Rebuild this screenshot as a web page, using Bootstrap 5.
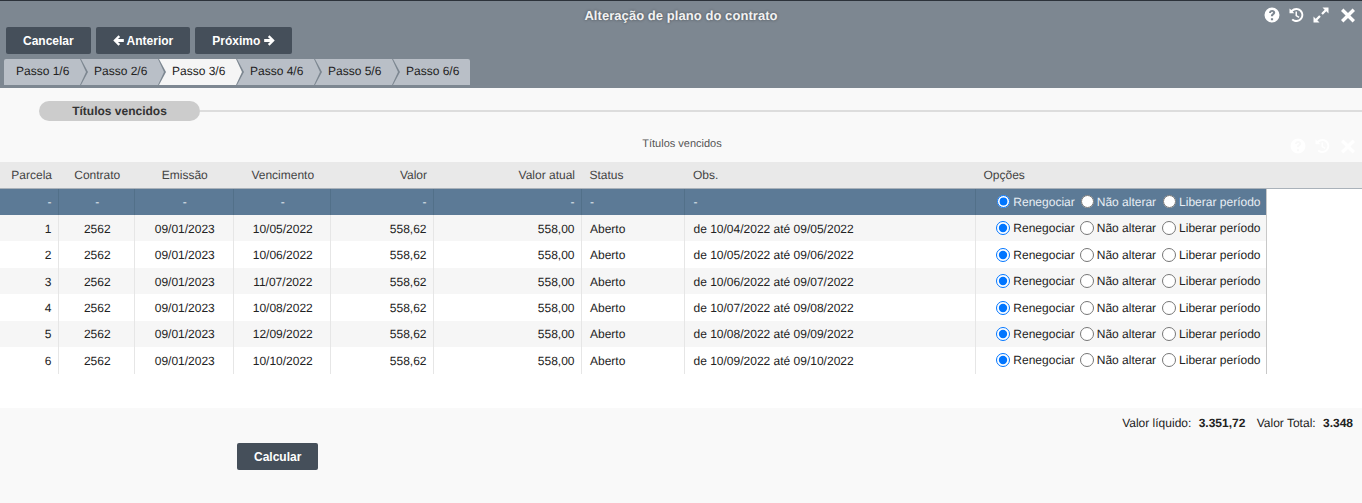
<!DOCTYPE html>
<html lang="pt-BR">
<head>
<meta charset="utf-8">
<title>Alteração de plano do contrato</title>
<link rel="stylesheet" href="https://cdn.jsdelivr.net/npm/bootstrap@5.3.0/dist/css/bootstrap.min.css">
<style>
html,body{height:503px;overflow:hidden}
body{font-family:"Liberation Sans",Arial,sans-serif;font-size:12px;background:#f9f9f9;color:#222;text-rendering:geometricPrecision}
.app-head{height:88px;background:#7d8791;border-top:1px solid #2c323a;color:#fff}
.head-title{height:26px;padding-top:7px;font-size:13px;font-weight:700;line-height:15px;text-align:center;position:relative}
.title-text{color:#f2f2f2;letter-spacing:.06px;text-shadow:0 0 3px rgba(0,0,0,.45)}
.head-icons{position:absolute;right:6px;top:6px}
.head-icons svg,.ghost-icons svg{display:block;width:16px;height:16px;fill:#fff;margin-left:8px}
.head-icons svg:nth-child(3){margin-left:9px}
.head-icons svg:nth-child(4){margin-left:11px}
.tool-row{gap:5px;padding-left:6px}
.tool-btn{background:#454f5a;color:#fff;border:0;border-radius:2px;font-size:12px;font-weight:700;height:27px;padding:1px 17px 0;line-height:26px}
.tool-btn:hover{background:#454f5a;color:#fff}
.tool-btn svg{width:11px;height:11px;fill:#fff;vertical-align:-1px}
.step-row{padding-left:4px;margin-top:5px;height:26px}
.step-item{height:26px;width:83px;margin-right:-5px;padding-left:13px;line-height:25px;background:#b9bfc7;color:#222;font-size:12px;
clip-path:polygon(0 0,calc(100% - 6px) 0,100% 50%,calc(100% - 6px) 100%,0 100%,7px 50%)}
.step-item:first-child{width:82px;padding-left:12px;clip-path:polygon(0 0,calc(100% - 6px) 0,100% 50%,calc(100% - 6px) 100%,0 100%);border-radius:2px 0 0 0}
.step-item:last-child{clip-path:polygon(0 0,100% 0,100% 100%,0 100%,7px 50%);width:77px;margin-right:0;border-radius:0 2px 0 0}
.step-item.on{background:#f5f5f5}
.legend-row{padding:13px 0 0 39px;height:45px}
.legend-pill{width:161px;height:20px;line-height:20px;border-radius:10px;background:#ccc;text-align:center;font-weight:700;color:#333}
.legend-line{height:2px;background:#ddd;flex:1}
.grid-title{height:29px;font-size:11px;color:#555;text-align:center;line-height:23px;padding-left:2px;position:relative}
.ghost-icons{position:absolute;right:6px;top:5px}
.ghost-icons svg:nth-child(3){margin-left:10px}
.grid-wrap{background:#fff;height:246px}
.data-grid{table-layout:fixed;width:1362px;border-collapse:collapse}
.data-grid col:nth-child(1){width:58px}
.data-grid col:nth-child(2){width:76px}
.data-grid col:nth-child(3){width:99px}
.data-grid col:nth-child(4){width:97px}
.data-grid col:nth-child(5){width:103px}
.data-grid col:nth-child(6){width:148px}
.data-grid col:nth-child(7){width:103px}
.data-grid col:nth-child(8){width:291px}
.data-grid col:nth-child(9){width:291px}
.data-grid col:nth-child(10){width:96px}
.data-grid th{height:26px;background:#e9e9e9;font-weight:400;color:#444;padding:1px 6px 0 8.500px;border-bottom:1px solid #aab2ba;white-space:nowrap}
.data-grid td{height:26.45px;padding:1px 6px 0 8.500px;border-right:1px solid #e6e6e6;white-space:nowrap;color:#222}
.data-grid th:nth-child(8),.data-grid td:nth-child(8){padding-left:9px}
.data-grid td.blank{border:0;background:#fff;padding:0}
.data-grid tr.filter-row td{background:#5c7a96;color:#e8eef4;height:27px;padding-top:0;border-right-color:#527089}
.data-grid tr.filter-row td.blank{background:#fff}
.data-grid tbody tr.shade td:not(.blank){background:#f6f6f6}
.data-grid td.last-col{border-right:1px solid #c8c8c8;padding:0 5px 0 0}
.data-grid tr.filter-row td.last-col{border-right-color:#c8c8c8;padding:0 5px 0 0}
.pick-row{display:flex;justify-content:flex-end;align-items:center}
.pick-row input{width:14px;height:14px;margin:0 3px 0 5px;flex:none}
.pick-row input:nth-of-type(3){margin-left:6px}
.filter-row .pick-row input{width:13px;height:13px;margin-left:6px}
.filter-row .pick-row input:nth-of-type(3){margin-left:7px}
.foot-line{padding:8px 9px 0 0;height:35px;line-height:15px;text-align:right}
.foot-line b{margin:0 8px 0 4px}
.foot-line b:last-child{margin-right:0}
.calc-wrap{padding-left:237px}
.calc-wrap .tool-btn{padding-top:0}
</style>
</head>
<body>
<div class="app-head">
  <div class="head-title"><span class="title-text">Alteração de plano do contrato</span>
    <div class="head-icons d-flex">
      <svg viewBox="0 0 16 16"><path fill-rule="evenodd" d="M8 .5a7.500 7.500 0 1 0 0 15 7.500 7.500 0 0 0 0-15zM6.900 11.200h2.200v2H6.900zM5 6c.2-1.900 1.500-3 3.200-3 1.700 0 3 1 3 2.600 0 1.300-.8 1.900-1.500 2.400-.5.400-.6.600-.6 1.300H6.900c0-1.300.3-1.900 1.100-2.500.6-.4 1-.7 1-1.200 0-.5-.4-.8-.9-.8-.6 0-1 .4-1.100 1.100z"/></svg>
      <svg viewBox="0 0 16 16"><path fill-rule="evenodd" d="M8.300 1A7 7 0 0 0 3.300 3.100L1.500 1.500V6.300H6.300L4.700 4.600A5 5 0 1 1 8.300 13a5 5 0 0 1-3.400-1.300L3.500 13.100A7 7 0 1 0 8.300 1zM7.500 4.500H9V8.200l2.500 1.500-.8 1.200-3.200-2z"/></svg>
      <svg viewBox="0 0 16 16"><path d="M9.500 .5H15.500V6.500L13.300 4.300 9.800 7.800 8.200 6.200 11.700 2.700zM6.500 15.500H.5V9.500L2.700 11.700 6.200 8.200 7.800 9.800 4.300 13.300z"/></svg>
      <svg viewBox="0 0 16 16"><path d="M3.400 1.500 8 6.100l4.600-4.600 2.400 2.400L10.400 8.500l4.600 4.600-2.400 2.400L8 10.900l-4.600 4.600L1 13.100l4.600-4.600L1 3.900z"/></svg>
    </div>
  </div>
  <div class="tool-row d-flex">
    <button class="btn tool-btn" type="button">Cancelar</button>
    <button class="btn tool-btn" type="button"><svg viewBox="0 0 12 12"><path d="M6 .3 7.800 2.100 5.400 4.400H11.800V7.600H5.400l2.400 2.300L6 11.700.3 6z"/></svg> Anterior</button>
    <button class="btn tool-btn" type="button">Próximo <svg viewBox="0 0 12 12"><path d="M6 .3 4.200 2.100 6.600 4.400H.2V7.600H6.600L4.200 9.900 6 11.700 11.700 6z"/></svg></button>
  </div>
  <div class="step-row d-flex">
    <div class="step-item">Passo 1/6</div>
    <div class="step-item">Passo 2/6</div>
    <div class="step-item on">Passo 3/6</div>
    <div class="step-item">Passo 4/6</div>
    <div class="step-item">Passo 5/6</div>
    <div class="step-item">Passo 6/6</div>
  </div>
</div>
<div class="legend-row">
  <div class="d-flex align-items-center"><div class="legend-pill">Títulos vencidos</div><div class="legend-line"></div></div>
</div>
<div class="grid-title">Títulos vencidos
  <div class="ghost-icons d-flex">
    <svg viewBox="0 0 16 16"><path fill-rule="evenodd" d="M8 .5a7.500 7.500 0 1 0 0 15 7.500 7.500 0 0 0 0-15zM6.900 11.200h2.200v2H6.900zM5 6c.2-1.900 1.500-3 3.200-3 1.700 0 3 1 3 2.600 0 1.300-.8 1.900-1.500 2.400-.5.400-.6.600-.6 1.300H6.900c0-1.300.3-1.900 1.100-2.500.6-.4 1-.7 1-1.200 0-.5-.4-.8-.9-.8-.6 0-1 .4-1.100 1.100z"/></svg>
    <svg viewBox="0 0 16 16"><path fill-rule="evenodd" d="M8.300 1A7 7 0 0 0 3.300 3.100L1.500 1.500V6.300H6.300L4.700 4.600A5 5 0 1 1 8.300 13a5 5 0 0 1-3.400-1.300L3.500 13.100A7 7 0 1 0 8.300 1zM7.500 4.500H9V8.200l2.500 1.500-.8 1.200-3.200-2z"/></svg>
    <svg viewBox="0 0 16 16"><path d="M3.400 1.500 8 6.100l4.600-4.600 2.400 2.400L10.400 8.500l4.600 4.600-2.400 2.400L8 10.900l-4.600 4.600L1 13.100l4.600-4.600L1 3.900z"/></svg>
  </div>
</div>
<div class="grid-wrap">
<table class="data-grid">
  <colgroup><col><col><col><col><col><col><col><col><col><col></colgroup>
  <thead><tr>
    <th class="text-end">Parcela</th><th class="text-center">Contrato</th><th class="text-center">Emissão</th><th class="text-center">Vencimento</th><th class="text-end">Valor</th><th class="text-end">Valor atual</th><th>Status</th><th>Obs.</th><th>Opções</th><th></th>
  </tr></thead>
  <tbody>
    <tr class="filter-row"><td class="text-end">-</td><td class="text-center">-</td><td class="text-center">-</td><td class="text-center">-</td><td class="text-end">-</td><td class="text-end">-</td><td>-</td><td>-</td><td class="last-col"><div class="pick-row"><input type="radio" name="r0" checked>Renegociar<input type="radio" name="r0">Não alterar<input type="radio" name="r0">Liberar período</div></td><td class="blank"></td></tr>
    <tr class="shade"><td class="text-end">1</td><td class="text-center">2562</td><td class="text-center">09/01/2023</td><td class="text-center">10/05/2022</td><td class="text-end">558,62</td><td class="text-end">558,00</td><td>Aberto</td><td>de 10/04/2022 até 09/05/2022</td><td class="last-col"><div class="pick-row"><input type="radio" name="r1" checked>Renegociar<input type="radio" name="r1">Não alterar<input type="radio" name="r1">Liberar período</div></td><td class="blank"></td></tr>
    <tr><td class="text-end">2</td><td class="text-center">2562</td><td class="text-center">09/01/2023</td><td class="text-center">10/06/2022</td><td class="text-end">558,62</td><td class="text-end">558,00</td><td>Aberto</td><td>de 10/05/2022 até 09/06/2022</td><td class="last-col"><div class="pick-row"><input type="radio" name="r2" checked>Renegociar<input type="radio" name="r2">Não alterar<input type="radio" name="r2">Liberar período</div></td><td class="blank"></td></tr>
    <tr class="shade"><td class="text-end">3</td><td class="text-center">2562</td><td class="text-center">09/01/2023</td><td class="text-center">11/07/2022</td><td class="text-end">558,62</td><td class="text-end">558,00</td><td>Aberto</td><td>de 10/06/2022 até 09/07/2022</td><td class="last-col"><div class="pick-row"><input type="radio" name="r3" checked>Renegociar<input type="radio" name="r3">Não alterar<input type="radio" name="r3">Liberar período</div></td><td class="blank"></td></tr>
    <tr><td class="text-end">4</td><td class="text-center">2562</td><td class="text-center">09/01/2023</td><td class="text-center">10/08/2022</td><td class="text-end">558,62</td><td class="text-end">558,00</td><td>Aberto</td><td>de 10/07/2022 até 09/08/2022</td><td class="last-col"><div class="pick-row"><input type="radio" name="r4" checked>Renegociar<input type="radio" name="r4">Não alterar<input type="radio" name="r4">Liberar período</div></td><td class="blank"></td></tr>
    <tr class="shade"><td class="text-end">5</td><td class="text-center">2562</td><td class="text-center">09/01/2023</td><td class="text-center">12/09/2022</td><td class="text-end">558,62</td><td class="text-end">558,00</td><td>Aberto</td><td>de 10/08/2022 até 09/09/2022</td><td class="last-col"><div class="pick-row"><input type="radio" name="r5" checked>Renegociar<input type="radio" name="r5">Não alterar<input type="radio" name="r5">Liberar período</div></td><td class="blank"></td></tr>
    <tr><td class="text-end">6</td><td class="text-center">2562</td><td class="text-center">09/01/2023</td><td class="text-center">10/10/2022</td><td class="text-end">558,62</td><td class="text-end">558,00</td><td>Aberto</td><td>de 10/09/2022 até 09/10/2022</td><td class="last-col"><div class="pick-row"><input type="radio" name="r6" checked>Renegociar<input type="radio" name="r6">Não alterar<input type="radio" name="r6">Liberar período</div></td><td class="blank"></td></tr>
  </tbody>
</table>
</div>
<div class="foot-line">Valor líquido: <b>3.351,72</b> Valor Total: <b>3.348</b></div>
<div class="calc-wrap"><button class="btn tool-btn" type="button">Calcular</button></div>
<script src="https://cdn.jsdelivr.net/npm/bootstrap@5.3.0/dist/js/bootstrap.bundle.min.js"></script>
</body>
</html>
